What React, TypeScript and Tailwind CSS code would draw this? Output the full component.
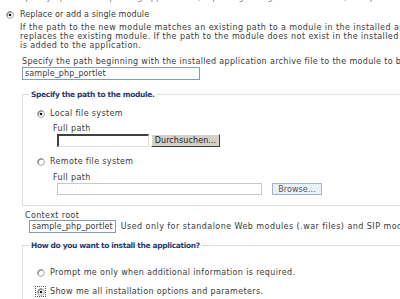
function Radio({ checked = false, focus = false }: { checked?: boolean; focus?: boolean }) {
  return (
    <span
      className={`inline-flex h-[9px] w-[9px] shrink-0 items-center justify-center ${
        focus ? "outline outline-1 outline-dotted outline-[#555]" : ""
      }`}
    >
      <svg width="8" height="8" viewBox="0 0 8 8">
        <circle cx="4" cy="4" r="3.4" fill="#fff" stroke="#9a9a9a" strokeWidth="0.9" />
        <path d="M1.3 5.4 A3.2 3.2 0 0 1 5.4 1.3" fill="none" stroke="#555" strokeWidth="0.8" />
        {checked && <circle cx="4" cy="4" r="1.3" fill="#111" />}
      </svg>
    </span>
  );
}

export default function App() {
  return (
    <div className="h-[299px] w-[400px] overflow-hidden whitespace-nowrap bg-white font-['DejaVu_Sans',sans-serif] text-[8px] leading-[9px] tracking-[0.35px] text-[#3a3a3a]">
      <div className="-mt-[7px] h-[9px] pl-[20px] text-[#777]">
        Specify options for updating applications, replacing a single file or module, or a partial application
      </div>

      <div className="mt-[8px] flex items-center gap-[6px] pl-[5px]">
        <Radio checked />
        <span className="tracking-[0.1px]">Replace or add a single module</span>
      </div>

      <div className="mt-[4px] pl-[20px] tracking-[0.42px]">
        <p>If the path to the new module matches an existing path to a module in the installed application, the new module</p>
        <p>replaces the existing module. If the path to the module does not exist in the installed application, the new module</p>
        <p>is added to the application.</p>
      </div>

      <div className="mt-[7px] pl-[22px] tracking-[0.33px]">
        Specify the path beginning with the installed application archive file to the module to be replaced or added.
      </div>
      <div className="pl-[22px] pt-[1px]">
        <div className="flex h-[13px] w-[178px] items-center border border-[#7f9db9] px-[2px] tracking-[0.1px]">sample_php_portlet</div>
      </div>

      <fieldset className="ml-[22px] mt-[10px] w-[420px] border border-[#dedede] pb-[10px] pl-[13px]">
        <legend className="-ml-[6px] px-[1px] text-[7.5px] font-bold leading-[9px] tracking-[-0.35px] text-[#1f3a6e]">
          Specify the path to the module.
        </legend>

        <div className="mt-[10px] flex items-center gap-[5px]">
          <Radio checked />
          <span>Local file system</span>
        </div>
        <div className="mt-[6px] pl-[17px]">Full path</div>
        <div className="mt-[1px] flex items-center gap-[2px] pl-[21px]">
          <div className="h-[13px] w-[92px] border-b border-l-2 border-r border-t-2 border-b-[#e4e2dc] border-l-[#404040] border-r-[#e4e2dc] border-t-[#404040] bg-white" />
          <div className="flex h-[13px] w-[69px] items-center justify-center border border-b-[#404040] border-l-white border-r-[#404040] border-t-white bg-[#d4d0c8] tracking-[0.1px] text-[#222]">
            Durchsuchen...
          </div>
        </div>

        <div className="mt-[10px] flex items-center gap-[5px]">
          <Radio />
          <span>Remote file system</span>
        </div>
        <div className="mt-[7px] pl-[17px]">Full path</div>
        <div className="mt-[1px] flex items-center gap-[10px] pl-[21px]">
          <div className="h-[12px] w-[205px] border border-[#c8c8c8] bg-white" />
          <div className="flex h-[12px] w-[50px] items-center justify-center border border-[#9fb3cf] bg-[#eaf0f8] tracking-[0.1px] text-[#555]">
            Browse...
          </div>
        </div>
      </fieldset>

      <div className="mt-[5px] pl-[25px]">Context root</div>
      <div className="flex items-center gap-[5px] pl-[29px]">
        <div className="flex h-[13px] w-[108px] items-center border border-[#7f9db9] px-[2px] tracking-[0.1px]">sample_php_portlet</div>
        <span className="tracking-[0.45px]">Used only for standalone Web modules (.war files) and SIP modules (.sar files)</span>
      </div>

      <fieldset className="ml-[22px] mt-[8px] w-[420px] border border-[#dedede] pb-[10px] pl-[13px]">
        <legend className="-ml-[6px] px-[1px] text-[7.5px] font-bold leading-[9px] tracking-[-0.35px] text-[#1f3a6e]">
          How do you want to install the application?
        </legend>

        <div className="mt-[18px] flex items-center gap-[5px]">
          <Radio />
          <span>Prompt me only when additional information is required.</span>
        </div>
        <div className="mt-[10px] flex items-center gap-[5px]">
          <Radio checked focus />
          <span>Show me all installation options and parameters.</span>
        </div>
      </fieldset>
    </div>
  );
}
